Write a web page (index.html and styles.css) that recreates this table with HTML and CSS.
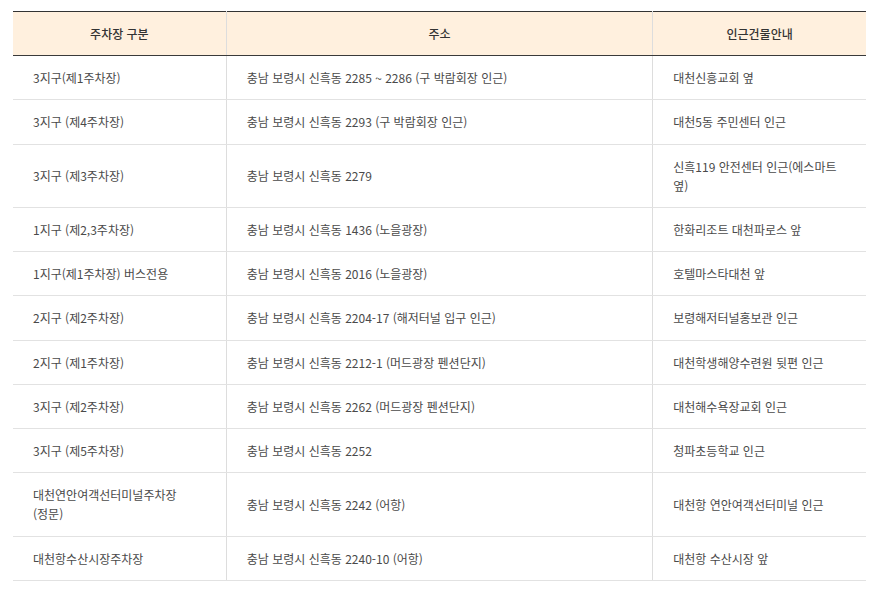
FILE: index.html
```html
<!DOCTYPE html>
<html lang="ko">
<head>
<meta charset="utf-8">
<title>주차장 안내</title>
<link rel="stylesheet" href="styles.css">
</head>
<body>
<div class="wrap">
<table class="park">
  <colgroup>
    <col class="c1"><col class="c2"><col class="c3">
  </colgroup>
  <thead>
    <tr><th>주차장 구분</th><th>주소</th><th>인근건물안내</th></tr>
  </thead>
  <tbody>
    <tr><td>3지구(제1주차장)</td><td>충남 보령시 신흑동 2285 ~ 2286 (구 박람회장 인근)</td><td>대천신흥교회 옆</td></tr>
    <tr><td>3지구 (제4주차장)</td><td>충남 보령시 신흑동 2293 (구 박람회장 인근)</td><td>대천5동 주민센터 인근</td></tr>
    <tr><td>3지구 (제3주차장)</td><td>충남 보령시 신흑동 2279</td><td>신흑119 안전센터 인근(에스마트 옆)</td></tr>
    <tr><td>1지구 (제2,3주차장)</td><td>충남 보령시 신흑동 1436 (노을광장)</td><td>한화리조트 대천파로스 앞</td></tr>
    <tr><td>1지구(제1주차장) 버스전용</td><td>충남 보령시 신흑동 2016 (노을광장)</td><td>호텔마스타대천 앞</td></tr>
    <tr><td>2지구 (제2주차장)</td><td>충남 보령시 신흑동 2204-17 (해저터널 입구 인근)</td><td>보령해저터널홍보관 인근</td></tr>
    <tr><td>2지구 (제1주차장)</td><td>충남 보령시 신흑동 2212-1 (머드광장 펜션단지)</td><td>대천학생해양수련원 뒷편 인근</td></tr>
    <tr><td>3지구 (제2주차장)</td><td>충남 보령시 신흑동 2262 (머드광장 펜션단지)</td><td>대천해수욕장교회 인근</td></tr>
    <tr><td>3지구 (제5주차장)</td><td>충남 보령시 신흑동 2252</td><td>청파초등학교 인근</td></tr>
    <tr><td>대천연안여객선터미널주차장<wbr>(정문)</td><td>충남 보령시 신흑동 2242 (어항)</td><td>대천항 연안여객선터미널 인근</td></tr>
    <tr><td>대천항수산시장주차장</td><td>충남 보령시 신흑동 2240-10 (어항)</td><td>대천항 수산시장 앞</td></tr>
  </tbody>
</table>
</div>
</body>
</html>
```

FILE: styles.css
```css
html, body {
  margin: 0;
  padding: 0;
  background: #fff;
}
.wrap {
  padding: 11px 14px 0 13px;
}
.park {
  width: 853px;
  border-collapse: collapse;
  table-layout: fixed;
  font-family: "Noto Sans CJK KR", "Noto Sans", sans-serif;
  font-size: 12px;
  line-height: 19.2px;
  color: #4a4a4a;
  border-top: 1px solid #333;
  word-break: keep-all;
}
.c1 { width: 25%; }
.c2 { width: 50%; }
.c3 { width: 25%; }
.park th {
  background: #fff0de;
  color: #333;
  font-weight: 500;
  text-align: center;
  padding: 12px 20px;
  border-bottom: 1px solid #3a3a3a;
  border-left: 1px solid #ddd;
}
.park td {
  padding: 12px 20px 12px 20px;
  text-align: left;
  vertical-align: middle;
  border-bottom: 1px solid #e2e2e2;
  border-left: 1px solid #ddd;
}
.park th:first-child,
.park td:first-child {
  border-left: none;
}
```
